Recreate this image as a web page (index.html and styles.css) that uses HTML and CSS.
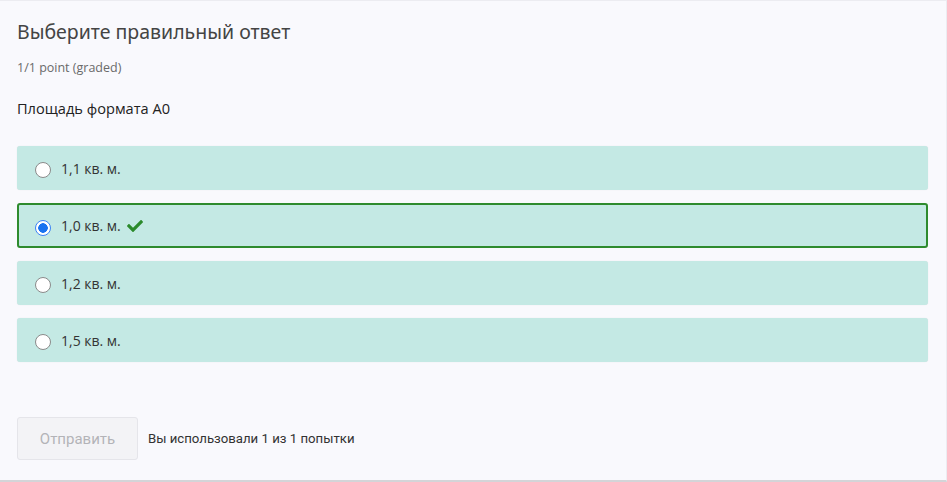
FILE: index.html
```html
<!DOCTYPE html>
<html lang="ru">
<head>
<meta charset="utf-8">
<link rel="stylesheet" href="styles.css">
</head>
<body>
<div class="problem">
  <h2 class="title">Выберите правильный ответ</h2>
  <div class="points">1/1 point (graded)</div>
  <p class="question">Площадь формата A0</p>
  <div class="choices">
    <label class="choice"><span class="radio"></span><span class="label">1,1 кв. м.</span></label>
    <label class="choice correct"><span class="radio checked"></span><span class="label">1,0 кв. м.</span>
      <svg class="check" viewBox="0 0 512 512" width="16" height="16"><path d="M173.9 439.4l-166.4-166.4c-10-10-10-26.2 0-36.2l36.2-36.2c10-10 26.2-10 36.2 0L192 312.7 432.1 72.6c10-10 26.2-10 36.2 0l36.2 36.2c10 10 10 26.2 0 36.2l-294.4 294.4c-10 10-26.2 10-36.2 0z" fill="#2b8a2b"/></svg>
    </label>
    <label class="choice"><span class="radio"></span><span class="label">1,2 кв. м.</span></label>
    <label class="choice"><span class="radio"></span><span class="label">1,5 кв. м.</span></label>
  </div>
  <div class="actions">
    <button class="submit" disabled>Отправить</button>
    <span class="attempts">Вы использовали 1 из 1 попытки</span>
  </div>
</div>
</body>
</html>
```

FILE: styles.css
```css
html, body {
  margin: 0;
  padding: 0;
}
body {
  width: 947px;
  height: 482px;
  background: #f9f9fd;
  font-family: "Open Sans", "Noto Sans", sans-serif;
  overflow: hidden;
}
.problem {
  box-sizing: border-box;
  height: 482px;
  border-top: 1px solid #ececf1;
  border-right: 1px solid #ececf1;
  border-bottom: 2px solid #d4d4d8;
  padding: 17px 18px 0 17px;
}
.title {
  margin: 0;
  font-family: "Noto Sans", sans-serif;
  font-weight: 400;
  font-size: 19.5px;
  line-height: 28px;
  color: #444;
}
.points {
  margin-top: 14px;
  font-size: 12.5px;
  line-height: 16px;
  color: #6a6a6a;
}
.question {
  margin: 22px 0 0;
  font-size: 14.6px;
  line-height: 20px;
  color: #222;
}
.choices {
  margin-top: 28px;
  display: flex;
  flex-direction: column;
  gap: 13px;
}
.choice {
  box-sizing: border-box;
  height: 44px;
  display: flex;
  align-items: center;
  background: #c4e9e4;
  border-radius: 3px;
  padding-left: 18px;
  box-shadow: 0 0 1px rgba(0,0,0,0.12);
  font-size: 14px;
  color: #333;
}
.choice.correct {
  height: 45px;
  border: 2px solid #2e8b2e;
  padding-left: 16px;
  box-shadow: none;
}
.radio {
  box-sizing: border-box;
  width: 16px;
  height: 16px;
  border-radius: 50%;
  border: 1px solid #8a8a8a;
  background: #fff;
  margin-right: 10px;
  margin-top: 4px;
}
.radio.checked {
  border: 1px solid #3b82f6;
  background: radial-gradient(circle, #1a73f0 0 4.5px, #fff 5px);
}
.check {
  margin-left: 6px;
}
.actions {
  margin-top: 55px;
  display: flex;
  align-items: center;
  gap: 10px;
}
.submit {
  box-sizing: border-box;
  width: 121px;
  height: 43px;
  background: #f3f3f6;
  border: 1px solid #e5e5ea;
  border-radius: 3px;
  color: #b3b3b8;
  font-family: "Roboto", sans-serif;
  font-size: 15px;
}
.attempts {
  font-family: "Roboto", sans-serif;
  font-size: 13.2px;
  color: #333;
}
```
